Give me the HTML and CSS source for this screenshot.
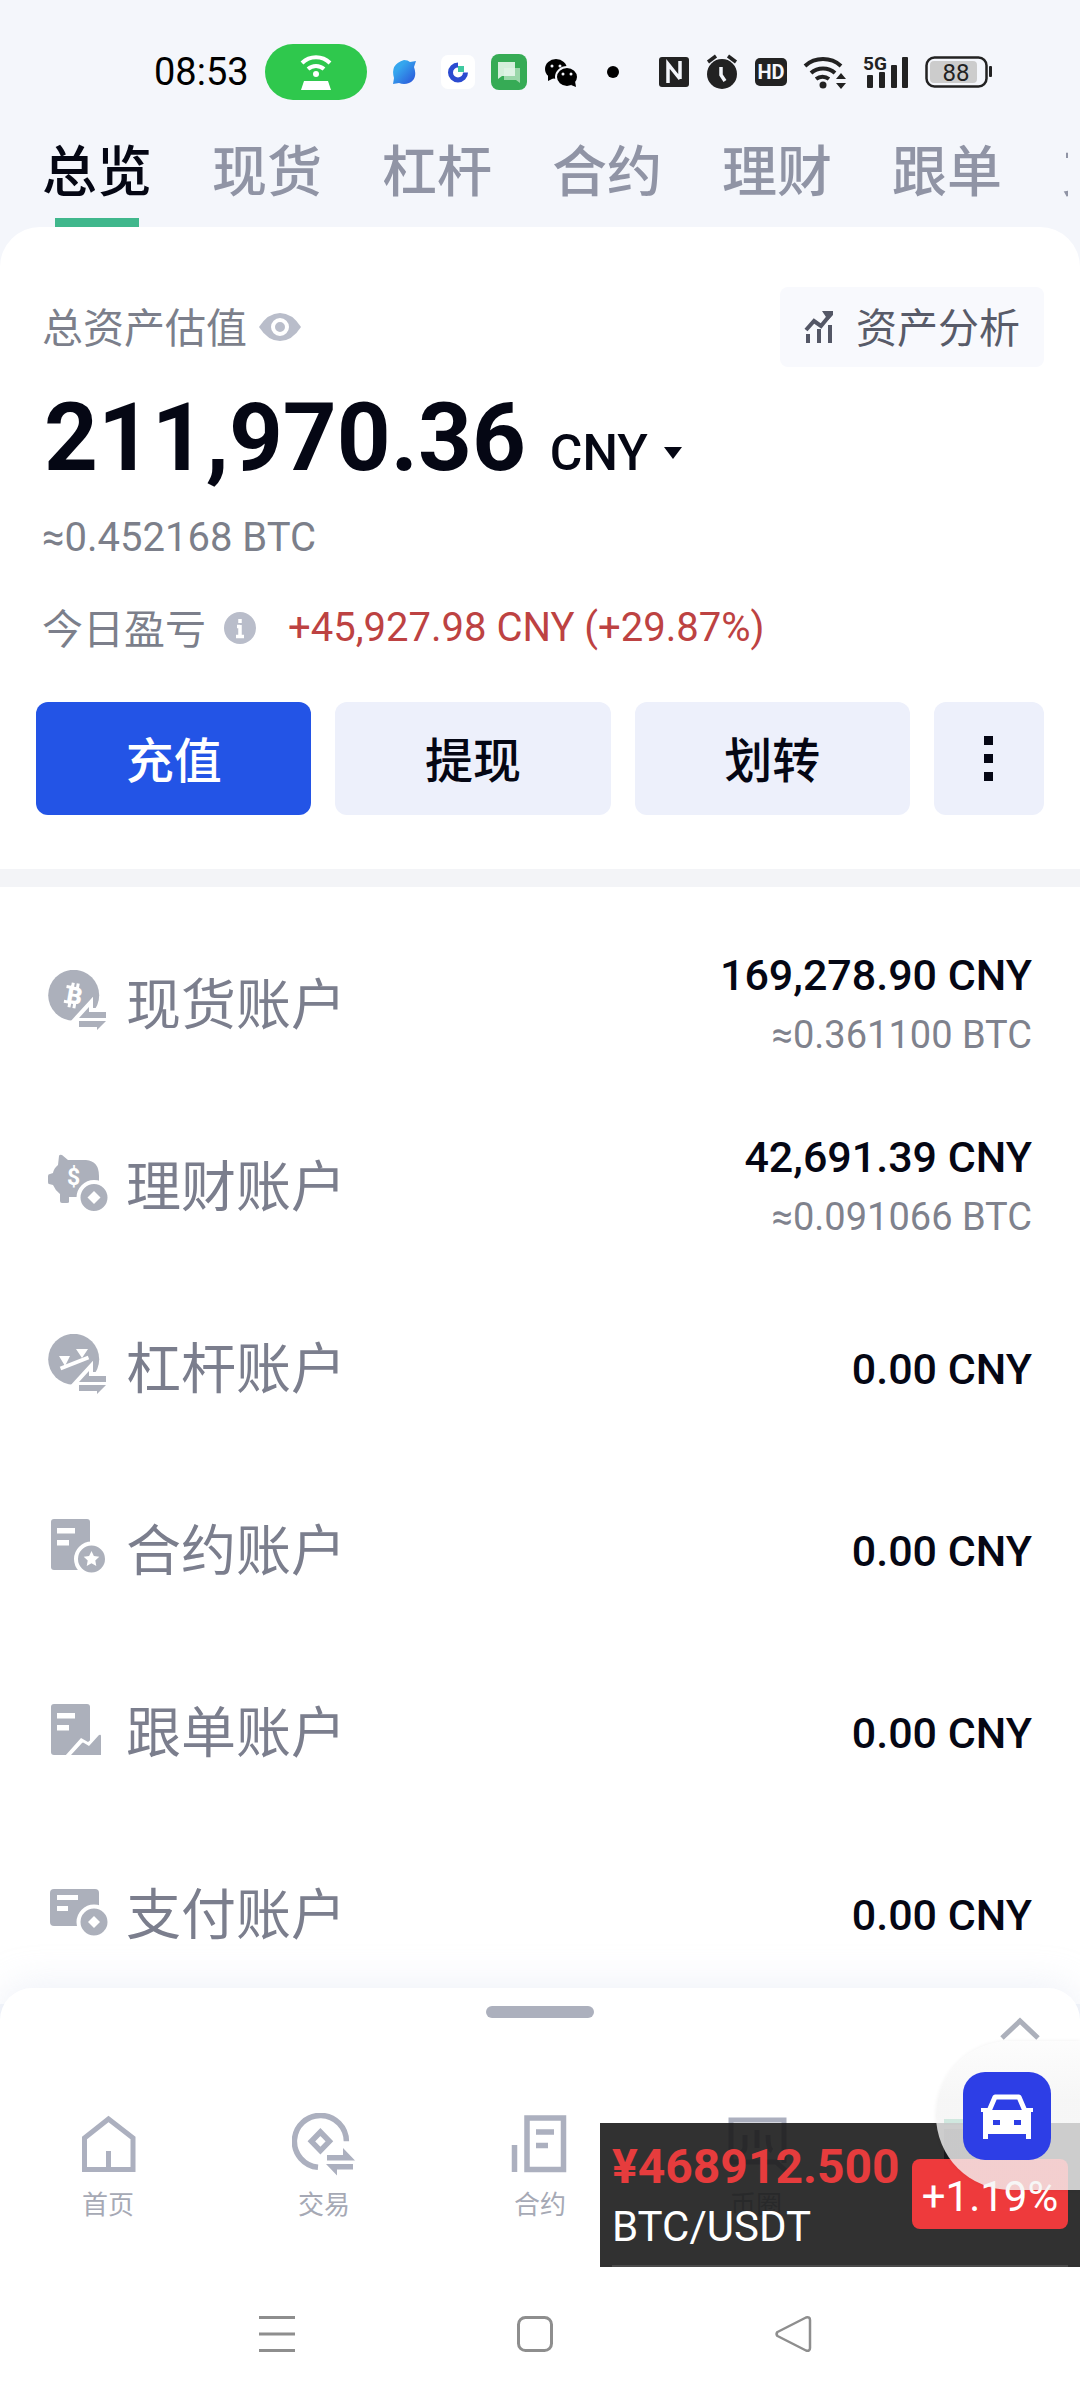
FILE: index.html
```html
<!DOCTYPE html>
<html lang="zh-CN">
<head>
<meta charset="utf-8">
<meta name="viewport" content="width=device-width, initial-scale=1">
<title>资产总览</title>
<link rel="stylesheet" href="styles.css">
</head>
<body>
<div class="app">
  <div class="status">
    <div class="status-group">
      <span class="clock">08:53</span>
      <span class="hotspot">
        <svg width="40" height="40" viewBox="0 0 40 40" fill="none" stroke="#fff" stroke-width="4"><path d="M6 11a20 20 0 0 1 28 0M12 17a12 12 0 0 1 16 0"/><circle cx="20" cy="22" r="3" fill="#fff" stroke="none"/><path d="M8 29h24l3 9H5z" fill="#fff" stroke="none"/></svg>
      </span>
      <svg width="42" height="36" viewBox="0 0 42 36"><defs><linearGradient id="planet" x1="0" y1="0" x2="1" y2="1"><stop offset="0.3" stop-color="#35a6ee"/><stop offset="1" stop-color="#2a4fd8"/></linearGradient></defs><path d="M21 6q4 0 6 2l6-1-2 6q4 12-5 16-5 2-10 0l-6 1 1-6Q7 10 21 6z" fill="url(#planet)"/></svg>
      <svg width="34" height="36" viewBox="0 0 34 36"><rect y="1" width="34" height="34" rx="7" fill="#fff"/><path d="M17 11a7.500 7.500 0 1 0 7.500 7.500" fill="none" stroke="#2b4bd0" stroke-width="5"/><rect x="17" y="12" width="6" height="6" fill="#3fc9a0"/></svg>
      <svg width="36" height="36" viewBox="0 0 36 36"><rect width="36" height="36" rx="8" fill="#36ab55"/><path d="M13 14h16v15l-4-3H13z" fill="#9ad7a9"/><path d="M7 8h17v14H11l-4 3z" fill="#e6f6ea" fill-opacity=".9"/></svg>
      <svg width="36" height="36" viewBox="0 0 36 36"><ellipse cx="13" cy="15" rx="11" ry="10"/><path d="M5 21v6l6-3z"/><ellipse cx="24" cy="23" rx="11" ry="10" stroke="#f4f6fb" stroke-width="2"/><path d="M28 31l5 2-1-6z"/><g fill="#f4f6fb"><circle cx="9" cy="12" r="1.500"/><circle cx="17" cy="12" r="1.500"/><circle cx="20" cy="20" r="1.500"/><circle cx="28" cy="20" r="1.500"/></g></svg>
      <svg width="36" height="36" viewBox="0 0 36 36"><circle cx="18" cy="18" r="6"/></svg>
    </div>
    <div class="status-group">
      <svg width="30" height="32" viewBox="0 0 30 32"><rect y="1" width="30" height="30" rx="3" fill="#222"/><path d="M9 27V8l12 15M21 5v18" fill="none" stroke="#f4f6fb" stroke-width="3.500"/></svg>
      <svg width="34" height="36" viewBox="0 0 34 36"><circle cx="17" cy="20" r="15" fill="#222"/><path d="M3 8l8-6M31 8l-8-6" stroke="#222" stroke-width="3.500"/><path d="M16 13v8l4 6" fill="none" stroke="#f4f6fb" stroke-width="3.500"/></svg>
      <svg width="32" height="30" viewBox="0 0 32 30"><rect y="1" width="32" height="28" rx="5" fill="#222"/><text x="16" y="22" class="glyph" font-size="20" font-weight="700" fill="#f4f6fb" text-anchor="middle">HD</text></svg>
      <svg width="44" height="36" viewBox="0 0 44 36" fill="none" stroke="#222" stroke-width="4"><path d="M2 12a27 27 0 0 1 36 0M8 19a18 18 0 0 1 24 0M13 25a11 11 0 0 1 13 0"/><g fill="#222" stroke="none"><circle cx="20" cy="31" r="3.500"/><path d="M33 25l5-6 5 6zM33 29l5 6 5-6z"/></g></svg>
      <svg width="46" height="44" viewBox="0 0 46 44" fill="#222"><text x="0" y="20" class="glyph" font-size="19" font-weight="700">5G</text><rect x="4" y="25" width="6" height="13" rx="1"/><rect x="16" y="22" width="6" height="16" rx="1"/><rect x="28" y="15" width="6" height="23" rx="1"/><rect x="39" y="7" width="6" height="31" rx="1"/></svg>
      <svg width="67" height="34" viewBox="0 0 67 34"><rect x="1.500" y="2.500" width="60" height="29" rx="8" fill="none" stroke="#222" stroke-width="2.500"/><rect x="5" y="6" width="47" height="22" rx="4" fill="#ccc"/><rect x="64" y="11" width="3" height="11" rx="1" fill="#222"/><text x="31" y="26" class="glyph" font-size="24" fill="#222" text-anchor="middle">88</text></svg>
    </div>
  </div>

  <nav class="tabs">
    <button class="tab tab-active">总览</button>
    <button class="tab">现货</button>
    <button class="tab">杠杆</button>
    <button class="tab">合约</button>
    <button class="tab">理财</button>
    <button class="tab">跟单</button>
    <button class="tab">支付</button>
  </nav>

  <main class="card">
    <section class="summary">
      <div class="summary-head">
        <span class="label">总资产估值</span>
        <svg width="42" height="30" viewBox="0 0 42 30"><path d="M0 15Q9 1 21 1t21 14Q33 29 21 29T0 15z" fill="#b9bdca"/><circle cx="21" cy="15" r="7" fill="none" stroke="#fff" stroke-width="4"/></svg>
        <button class="analysis">
          <svg width="30" height="34" viewBox="0 0 30 34" fill="none" stroke="#545766" stroke-width="4"><path d="M2 20l8-9 7 5L26 5"/><path d="M18 1h11v4l-5 5z" fill="#545766" stroke="none"/><path d="M4 24v9M15 19v14M26 15v18"/></svg>
          <span class="button-text">资产分析</span>
        </button>
      </div>
      <div class="total">
        <strong class="total-value">211,970.36</strong>
        <button class="currency">CNY
          <svg width="18" height="12" viewBox="0 0 18 12"><path d="M0 0h18L9 12z" fill="#050714"/></svg>
        </button>
      </div>
      <p class="total-btc">≈0.452168 BTC</p>
      <p class="profit">
        <span class="label">今日盈亏</span>
        <svg width="32" height="32" viewBox="0 0 32 32"><circle cx="16" cy="16" r="16" fill="#b9bdca"/><path d="M16 7v4M16 13v12M13 14.500h3M12 24.500h8" stroke="#fff" stroke-width="3.500"/></svg>
        <span class="profit-value">+45,927.98 CNY (+29.87%)</span>
      </p>
      <div class="actions">
        <button class="action action-primary"><span class="button-text">充值</span></button>
        <button class="action"><span class="button-text">提现</span></button>
        <button class="action"><span class="button-text">划转</span></button>
        <button class="action" aria-label="更多"><svg width="10" height="46" viewBox="0 0 10 46" fill="#050714"><rect width="9" height="9"/><rect y="18" width="9" height="9"/><rect y="36" width="9" height="9"/></svg></button>
      </div>
    </section>

    <ul class="accounts">
      <li class="account">
        <svg width="60" height="64" viewBox="0 0 60 64" fill="#acb0bb"><circle cx="25.700" cy="25.300" r="25.500"/><g transform="rotate(10 26 26)"><text x="26.500" y="34" class="glyph" font-size="24" font-weight="900" fill="#fff" text-anchor="middle">B</text><path d="M23 13v5M28 13v5M23 33v5M28 33v5M17 18h6M17 33h6" stroke="#fff" stroke-width="3"/></g><path d="M31 48L41 37v5h17v6zM31 51h27l-9 9v-3H31z" stroke="#fff" stroke-width="8"/><path d="M31 48L41 37v5h17v6zM31 51h27l-9 9v-3H31z"/></svg>
        <span class="account-name">现货账户</span>
        <span class="account-sum"><b class="amount">169,278.90 CNY</b><span class="amount-btc">≈0.361100 BTC</span></span>
      </li>
      <li class="account">
        <svg width="60" height="64" viewBox="0 0 60 64" fill="#acb0bb"><path d="M10 13l1-9q.5-2 3-1l6 5h18q13 1 13 16v10L38 45H21v5q0 1-2 1h-5q-2 0-2-2v-7q-5-4-7-9l-4-1q-1 0-1-2v-6q0-2 2-2l3-1q1-5 5-8z"/><text x="25.500" y="33" class="glyph" font-size="23" font-weight="700" fill="#fff" text-anchor="middle">$</text><circle cx="46" cy="45.500" r="15.500" stroke="#fff" stroke-width="4"/><path d="M46 39l6.500 6.500L46 52l-6.500-6.500z" fill="#fff"/></svg>
        <span class="account-name">理财账户</span>
        <span class="account-sum"><b class="amount">42,691.39 CNY</b><span class="amount-btc">≈0.091066 BTC</span></span>
      </li>
      <li class="account">
        <svg width="60" height="64" viewBox="0 0 60 64" fill="#acb0bb"><circle cx="25.700" cy="25.300" r="25.500"/><path d="M11 22h11l-5 10zM28 15h12l-6 9z" fill="#fff"/><path d="M12.500 34.500L40.500 23.500" stroke="#fff" stroke-width="4"/><path d="M31 48L41 37v5h17v6zM31 51h27l-9 9v-3H31z" stroke="#fff" stroke-width="8"/><path d="M31 48L41 37v5h17v6zM31 51h27l-9 9v-3H31z"/></svg>
        <span class="account-name">杠杆账户</span>
        <span class="account-sum"><b class="amount">0.00 CNY</b></span>
      </li>
      <li class="account">
        <svg width="60" height="64" viewBox="0 0 60 64" fill="#acb0bb"><rect x="3" y="3" width="39" height="51" rx="3"/><path d="M9 12h18v5.500H9zM9 24h12v5.500H9z" fill="#fff"/><circle cx="43.500" cy="43" r="15.500" stroke="#fff" stroke-width="4"/><path d="M43.500 35l2.400 5 5.400.7-4 3.800 1 5.500-4.800-2.700-4.800 2.700 1-5.500-4-3.800 5.400-.7z" fill="#fff"/></svg>
        <span class="account-name">合约账户</span>
        <span class="account-sum"><b class="amount">0.00 CNY</b></span>
      </li>
      <li class="account">
        <svg width="60" height="64" viewBox="0 0 60 64" fill="#acb0bb"><rect x="3" y="6" width="39" height="51" rx="3"/><path d="M9 15h18v5.500H9zM9 27h12v5.500H9z" fill="#fff"/><path d="M17 58l16-18 7 4 6-5v20z" fill="#fff"/><path d="M23 57l11-12q1-1 2 0l5 3 10-11q2-1 2 1v19z"/></svg>
        <span class="account-name">跟单账户</span>
        <span class="account-sum"><b class="amount">0.00 CNY</b></span>
      </li>
      <li class="account">
        <svg width="60" height="64" viewBox="0 0 60 64" fill="#acb0bb"><rect x="2" y="9" width="49" height="37" rx="4"/><path d="M9 15h21v5H9zM9 26h11v5H9z" fill="#fff"/><circle cx="46" cy="42" r="15.500" stroke="#fff" stroke-width="4"/><path d="M46 36l6 6-6 6-6-6z" fill="#fff"/></svg>
        <span class="account-name">支付账户</span>
        <span class="account-sum"><b class="amount">0.00 CNY</b></span>
      </li>
    </ul>
  </main>

  <footer class="sheet">
    <div class="sheet-head">
      <span class="handle"></span>
      <button class="expand" aria-label="展开"><svg width="40" height="24" viewBox="0 0 40 24"><path d="M2 21L20 4l18 17" fill="none" stroke="#acb0bb" stroke-width="5"/></svg></button>
    </div>
    <nav class="menu">
      <a class="menu-item" href="#home"><svg width="64" height="64" viewBox="0 0 64 64" fill="none" stroke="#acb0bf" stroke-width="5"><path d="M8.500 25L32.500 6 57 25v31.500H8.500zM32.500 38v18"/></svg>首页</a>
      <a class="menu-item" href="#trade"><svg width="64" height="64" viewBox="0 0 64 64" fill="none" stroke="#acb0bf" stroke-width="5.500"><path d="M54.400 28.300a26 26 0 1 0-28.400 26"/><path d="M28.400 19l9 9.300-9 9.300-9-9.300z"/><path d="M35 42h16v-7l12 12.500H35zM34 51h27v5.500H45v6z" fill="#acb0bf" stroke="none"/></svg>交易</a>
      <a class="menu-item" href="#futures"><svg width="64" height="64" viewBox="0 0 64 64" fill="none" stroke="#acb0bf" stroke-width="5.500"><path d="M6.500 32v27M19 5h36.500v51.500H19zM28 19h18M28 32.500h12"/></svg>合约</a>
      <a class="menu-item" href="#circle"><svg width="64" height="64" viewBox="0 0 64 64" fill="none" stroke="#acb0bf" stroke-width="5"><path d="M62 58L52 49H7V7h53v43M21 22v12q0 4-4 6M33 17v18M44 22q0 14 4 16"/></svg>币圈</a>
      <a class="menu-item" href="#assets" aria-label="资产"><svg width="64" height="64" viewBox="0 0 64 64"><path d="M4 6h40v6H4z" fill="#40b78c"/><path d="M4 16h54v42H4z" fill="#0a0d2c"/></svg></a>
    </nav>
    <div class="system">
      <button class="system-key" aria-label="任务"><svg width="40" height="40" viewBox="0 0 40 40" stroke="#8e8e8e" stroke-width="3"><path d="M2 3.500h36M2 20h36M2 36.500h36"/></svg></button>
      <button class="system-key" aria-label="主页"><svg width="40" height="40" viewBox="0 0 40 40" fill="none" stroke="#8e8e8e" stroke-width="3"><rect x="3.500" y="3.500" width="33" height="33" rx="7"/></svg></button>
      <button class="system-key" aria-label="返回"><svg width="40" height="40" viewBox="0 0 40 40" fill="none" stroke="#8e8e8e" stroke-width="2.500" stroke-linejoin="round"><path d="M4.500 18L33 3.500q4-1 4 2.500v28q0 3.500-4 2.500L4.500 22q-2-2 0-4z"/></svg></button>
    </div>

    <div class="ticker">
      <div class="ticker-body">
        <div class="ticker-info">
          <span class="ticker-price">¥468912.500</span>
          <span class="ticker-pair">BTC/USDT</span>
        </div>
        <span class="ticker-change">+1.19%</span>
      </div>
    </div>
    <button class="bubble" aria-label="驾驶模式">
      <span class="bubble-icon"><svg width="56" height="50" viewBox="0 0 56 50"><path d="M10 20l6-14h24l6 14" fill="none" stroke="#fff" stroke-width="5" stroke-linejoin="round"/><path d="M2 17h9v2h34v-2h9v4h-2v27h-5v-5H9v5H4V21H2z" fill="#fff"/><path d="M14 29h7v5h-7zM35 29h7v5h-7z" fill="#2d3ee6"/></svg></span>
    </button>
  </footer>
</div>
</body>
</html>
```
FILE: styles.css
```css
* {
  box-sizing: border-box;
}

body {
  margin: 0;
  background: #f4f6fb;
  color: #050714;
  font-family: Roboto, "Noto Sans CJK SC", sans-serif;
}

button {
  margin: 0;
  padding: 0;
  border: 0;
  background: none;
  color: inherit;
  font: inherit;
  cursor: pointer;
}

p {
  margin: 0;
}

svg {
  display: block;
  flex: none;
}

.glyph {
  font-family: Roboto, sans-serif;
}

.app {
  display: flex;
  flex-direction: column;
  min-height: 100vh;
  overflow: hidden;
}

/* status bar */
.status {
  display: flex;
  justify-content: space-between;
  padding: 44px 88px 0 154px;
}

.status-group {
  display: flex;
  align-items: center;
  gap: 16px;
  height: 56px;
}

.clock {
  font-size: 38px;
  line-height: 56px;
  color: #000;
}

.hotspot {
  display: flex;
  align-items: center;
  justify-content: center;
  width: 102px;
  height: 56px;
  border-radius: 28px;
  background: #2fc84d;
}

/* account tabs */
.tabs {
  display: flex;
  gap: 60px;
  margin-right: 12px;
  padding: 30px 0 0 42px;
  overflow: hidden;
}

.tab {
  flex: none;
  display: flex;
  flex-direction: column;
  align-items: center;
  height: 97px;
  font-family: "Noto Sans CJK SC", sans-serif;
  font-size: 55px;
  line-height: 74px;
  font-weight: 500;
  color: #9094a5;
}

.tab-active {
  color: #050714;
}

.tab-active::after {
  content: "";
  width: 84px;
  height: 9px;
  margin-top: 14px;
  background: #40b78c;
}

/* main card */
.card {
  flex: 1;
  border-radius: 40px 40px 0 0;
  background: #fff;
}

.summary {
  padding: 60px 36px 54px;
  border-bottom: 18px solid #f3f4f7;
}

.summary-head {
  display: flex;
  align-items: center;
  gap: 12px;
  padding-left: 6px;
}

.label {
  padding-bottom: 4px;
  font-family: "Noto Sans CJK SC", sans-serif;
  font-size: 41px;
  line-height: 56px;
  color: #7c7f8b;
}

.button-text {
  padding-bottom: 4px;
}

.analysis {
  display: flex;
  align-items: center;
  gap: 22px;
  height: 80px;
  margin-left: auto;
  padding: 0 24px;
  border-radius: 8px;
  background: #f8f9fd;
  font-family: "Noto Sans CJK SC", sans-serif;
  font-size: 41px;
  color: #585b69;
}

.total {
  display: flex;
  align-items: baseline;
  gap: 24px;
  padding: 15px 6px 0 8px;
}

.total-value {
  font-size: 94px;
  line-height: 112px;
  font-weight: 700;
}

.currency {
  display: flex;
  align-items: center;
  gap: 16px;
  font-size: 50px;
  line-height: 60px;
  font-weight: 500;
}

.total-btc {
  padding: 16px 6px 0;
  font-size: 40px;
  line-height: 56px;
  color: #7c7f8a;
}

.profit {
  display: flex;
  align-items: center;
  gap: 18px;
  padding: 32px 6px 0;
}

.profit-value {
  margin-left: 14px;
  font-size: 40px;
  line-height: 60px;
  color: #bd4242;
}

.actions {
  display: grid;
  grid-template-columns: 1fr 1fr 1fr 110px;
  gap: 24px;
  margin-top: 44px;
}

.action {
  display: flex;
  align-items: center;
  justify-content: center;
  height: 113px;
  border-radius: 12px;
  background: #edf0fb;
  font-family: "Noto Sans CJK SC", sans-serif;
  font-size: 48px;
  font-weight: 500;
}

.action-primary {
  background: #2354e6;
  color: #fff;
}

/* account list */
.accounts {
  margin: 0;
  padding: 24px 48px 0;
  list-style: none;
}

.account {
  display: flex;
  align-items: center;
  gap: 18px;
  height: 182px;
}

.account-name {
  padding-bottom: 4px;
  font-family: "Noto Sans CJK SC", sans-serif;
  font-size: 55px;
  line-height: 74px;
  color: #7b7e8d;
}

.account-sum {
  display: flex;
  flex-direction: column;
  align-items: flex-end;
  gap: 4px;
  margin-left: auto;
  padding-top: 6px;
}

.amount {
  font-size: 43px;
  line-height: 56px;
  font-weight: 500;
}

.amount-btc {
  font-size: 38px;
  line-height: 56px;
  color: #7f828d;
}

/* bottom sheet */
.sheet {
  position: relative;
  margin-top: -16px;
  padding-top: 18px;
  border-radius: 32px 32px 0 0;
  background: #fff;
  box-shadow: 0 -4px 36px rgba(206, 214, 236, 0.35);
}

.sheet-head {
  display: grid;
  grid-template-columns: 1fr 108px 1fr;
  align-items: start;
  padding: 0 40px;
}

.handle {
  grid-column: 2;
  height: 12px;
  border-radius: 6px;
  background: #acb0bd;
}

.expand {
  justify-self: end;
  margin-top: 11px;
}

.menu {
  display: grid;
  grid-template-columns: repeat(5, 1fr);
  margin-top: 72px;
}

.menu-item {
  display: flex;
  flex-direction: column;
  align-items: center;
  gap: 8px;
  padding-bottom: 2px;
  font-family: "Noto Sans CJK SC", sans-serif;
  font-size: 26px;
  line-height: 36px;
  color: #a6a9b5;
  text-decoration: none;
}

.system {
  display: flex;
  justify-content: center;
  gap: 218px;
  padding: 91px 10px 46px 0;
}

/* floating price ticker */
.ticker {
  position: absolute;
  top: 135px;
  right: 0;
  width: 480px;
  padding: 0 12px;
  background: rgba(27, 27, 27, 0.9);
}

.ticker-body {
  display: flex;
  align-items: center;
  justify-content: space-between;
  height: 144px;
  border-bottom: 2px solid #4a4a4a;
}

.ticker-info {
  display: flex;
  flex-direction: column;
  padding-top: 6px;
  line-height: 60px;
  white-space: nowrap;
}

.ticker-price {
  font-size: 48px;
  font-weight: 700;
  color: #e63c3d;
}

.ticker-pair {
  font-size: 42px;
  color: #fff;
}

.ticker-change {
  width: 156px;
  height: 70px;
  border-radius: 8px;
  background: #ee3a3c;
  font-size: 42px;
  line-height: 76px;
  text-align: center;
  color: #fff;
}

.bubble {
  position: absolute;
  top: 53px;
  right: 0;
  display: flex;
  align-items: center;
  width: 144px;
  height: 149px;
  padding-left: 27px;
  border-radius: 75px 0 0 75px;
  background: linear-gradient(rgba(252, 252, 252, 0.8), rgba(244, 244, 244, 0.8) 40%);
  box-shadow: 0 0 4px rgba(0, 0, 0, 0.06);
}

.bubble-icon {
  display: flex;
  align-items: center;
  justify-content: center;
  width: 88px;
  height: 88px;
  border-radius: 22px;
  background: #2d3ee6;
}
```
